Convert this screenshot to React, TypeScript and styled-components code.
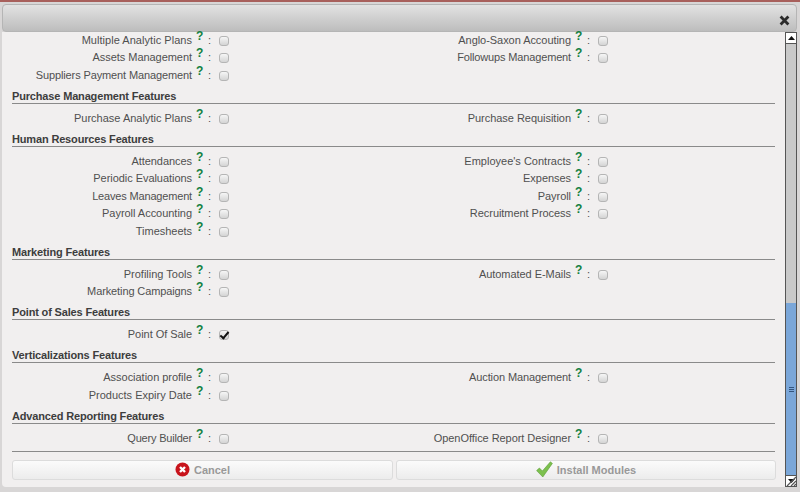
import styled, { createGlobalStyle } from 'styled-components';

interface Feature {
  label: string;
  checked?: boolean;
  tracking?: number;
}

interface Section {
  title?: string;
  features: Feature[];
}

const sections: Section[] = [
  {
    features: [
      { label: 'Multiple Analytic Plans', tracking: 0.04 },
      { label: 'Anglo-Saxon Accouting' },
      { label: 'Assets Management' },
      { label: 'Followups Management', tracking: -0.15 },
      { label: 'Suppliers Payment Management', tracking: -0.12 },
    ],
  },
  {
    title: 'Purchase Management Features',
    features: [
      { label: 'Purchase Analytic Plans', tracking: 0 },
      { label: 'Purchase Requisition', tracking: -0.03 },
    ],
  },
  {
    title: 'Human Resources Features',
    features: [
      { label: 'Attendances' },
      { label: "Employee's Contracts", tracking: 0 },
      { label: 'Periodic Evaluations' },
      { label: 'Expenses' },
      { label: 'Leaves Management', tracking: -0.17 },
      { label: 'Payroll' },
      { label: 'Payroll Accounting', tracking: -0.03 },
      { label: 'Recruitment Process' },
      { label: 'Timesheets', tracking: -0.03 },
    ],
  },
  {
    title: 'Marketing Features',
    features: [
      { label: 'Profiling Tools', tracking: 0 },
      { label: 'Automated E-Mails' },
      { label: 'Marketing Campaigns', tracking: -0.11 },
    ],
  },
  {
    title: 'Point of Sales Features',
    features: [{ label: 'Point Of Sale', checked: true }],
  },
  {
    title: 'Verticalizations Features',
    features: [
      { label: 'Association profile', tracking: -0.03 },
      { label: 'Auction Management', tracking: -0.11 },
      { label: 'Products Expiry Date', tracking: 0 },
    ],
  },
  {
    title: 'Advanced Reporting Features',
    features: [
      { label: 'Query Builder', tracking: -0.2 },
      { label: 'OpenOffice Report Designer', tracking: -0.05 },
    ],
  },
];

const App = () => {
  return (
    <>
      <GlobalStyle />
      <Dialog>
        <Header>
          <CloseIcon width="11" height="11" viewBox="0 0 11 11">
            <path d="M1.6 1.6 L9.4 9.4 M9.4 1.6 L1.6 9.4" stroke="#2b2b2b" strokeWidth="2.8" />
          </CloseIcon>
        </Header>
        <Body>
          <Content>
            {sections.map((section, i) => (
              <div key={i}>
                {section.title ? <SectionTitle>{section.title}</SectionTitle> : null}
                <FieldGrid>
                  {section.features.map((feature) => (
                    <Field key={feature.label}>
                      <FieldLabel $tracking={feature.tracking ?? -0.05}>{feature.label}</FieldLabel>
                      <Help>?</Help>
                      <Colon>:</Colon>
                      <Checkbox type="checkbox" defaultChecked={feature.checked} />
                    </Field>
                  ))}
                </FieldGrid>
              </div>
            ))}
            <Footer>
              <ActionButton>
                <svg width="15" height="15" viewBox="0 0 15 15">
                  <circle cx="7.5" cy="7.5" r="7" fill="#c8141c" />
                  <path d="M5 5 L10 10 M10 5 L5 10" stroke="#fff" strokeWidth="2.4" />
                </svg>
                Cancel
              </ActionButton>
              <ActionButton>
                <svg width="17" height="17" viewBox="0 0 17 17">
                  <path d="M0.6 9.6 L3.4 7 L6.4 10 L14.4 0.8 L16.4 2.4 L6.8 16 Z" fill="#7cc04e" stroke="#5d9e38" strokeWidth="0.6" />
                </svg>
                Install Modules
              </ActionButton>
            </Footer>
          </Content>
          <Scrollbar>
            <ScrollButton>
              <svg width="7" height="4" viewBox="0 0 7 4">
                <path d="M3.5 0 L7 4 L0 4 Z" fill="#111" />
              </svg>
            </ScrollButton>
            <ScrollTrack />
            <ScrollThumb>
              <Grip />
              <Grip />
              <Grip />
            </ScrollThumb>
            <ScrollButton>
              <svg width="7" height="4" viewBox="0 0 7 4">
                <path d="M0 0 L7 0 L3.5 4 Z" fill="#111" />
              </svg>
            </ScrollButton>
            <ResizeHandle width="12" height="12" viewBox="0 0 12 12">
              <path d="M11 2 L2 11 M11 6 L6 11 M11 9 L9 11" stroke="#555" strokeWidth="1.2" />
            </ResizeHandle>
          </Scrollbar>
        </Body>
      </Dialog>
    </>
  );
};

export default App;

const GlobalStyle = createGlobalStyle`
  html, body {
    margin: 0;
    padding: 0;
    height: 492px;
    overflow: hidden;
    background: #cfcfcf;
  }

  body {
    font-family: "Liberation Sans", Arial, sans-serif;
    font-size: 11px;
    color: #505050;
  }
`;

const Dialog = styled.div`
  box-sizing: border-box;
  width: 800px;
  height: 492px;
  padding: 0 3px 5px 2px;
  border-top: 2px solid #a8605c;
  background: #d8d6d6;
  display: flex;
  flex-direction: column;
`;

const Header = styled.div`
  box-sizing: border-box;
  height: 28px;
  flex: none;
  margin-top: 2px;
  padding: 10px 6px 0 0;
  border: 1px solid #b5b5b5;
  border-radius: 4px;
  background: linear-gradient(#e2e2e2, #bdbdbd);
  display: flex;
  justify-content: flex-end;
`;

const CloseIcon = styled.svg`
  display: block;
`;

const Body = styled.div`
  flex: 1;
  min-height: 0;
  display: flex;
  background: #f1efef;
  border-radius: 0 0 4px 4px;
`;

const Content = styled.div`
  flex: 1;
  min-width: 0;
  margin-top: -0.7px;
  padding: 0 10px;
`;

const SectionTitle = styled.div`
  height: 14px;
  margin: 5.4px 0 5.3px;
  line-height: 15px;
  font-weight: bold;
  letter-spacing: -0.16px;
  color: #3d3d3d;
  border-bottom: 1px solid #8a8a8a;
`;

const FieldGrid = styled.div`
  display: grid;
  grid-template-columns: 379px 1fr;
  grid-auto-rows: 17.4px;
`;

const Field = styled.div`
  display: flex;
  align-items: center;
`;

const FieldLabel = styled.span<{ $tracking: number }>`
  width: 180px;
  flex: none;
  text-align: right;
  letter-spacing: ${(props) => props.$tracking}px;
`;

const Help = styled.sup`
  width: 8px;
  margin-left: 4px;
  font-size: 12px;
  line-height: 12px;
  font-weight: bold;
  color: #12803f;
  position: relative;
  top: -4px;
  vertical-align: baseline;
`;

const Colon = styled.span`
  margin-left: 4px;
  width: 11px;
`;

const Checkbox = styled.input`
  appearance: none;
  box-sizing: border-box;
  position: relative;
  width: 10px;
  height: 10px;
  margin: 2px 0 0;
  border: 1px solid #b5b5b5;
  border-radius: 3px;
  background: linear-gradient(#f6f6f6, #d4d4d4);

  &:checked::after {
    content: '';
    position: absolute;
    left: 2px;
    top: -1px;
    width: 3px;
    height: 7px;
    border: solid #111;
    border-width: 0 2px 2px 0;
    transform: rotate(40deg);
  }
`;

const Footer = styled.div`
  display: grid;
  grid-template-columns: 381px 380px;
  gap: 3px;
  margin-top: 4.7px;
  padding-top: 8px;
  border-top: 1px solid #8a8a8a;
`;

const ActionButton = styled.button`
  box-sizing: border-box;
  height: 20px;
  padding: 0;
  border: 1px solid #dcdcdc;
  border-radius: 3px;
  background: linear-gradient(#fbfbfb, #ececec);
  font-family: inherit;
  font-size: 11px;
  font-weight: bold;
  color: #999;
  display: flex;
  align-items: center;
  justify-content: center;
  gap: 4px;
`;

const Scrollbar = styled.div`
  box-sizing: border-box;
  width: 12px;
  flex: none;
  display: flex;
  flex-direction: column;
  position: relative;
  border: 1px solid #555;
  border-width: 0 1px;
`;

const ScrollButton = styled.div`
  box-sizing: border-box;
  height: 12px;
  flex: none;
  background: #fff;
  border: solid #555;
  border-width: 1px 0;
  display: flex;
  align-items: center;
  justify-content: center;
`;

const ScrollTrack = styled.div`
  height: 259px;
  flex: none;
  background: #c9c9c9;
`;

const ScrollThumb = styled.div`
  flex: 1;
  background: #7ba7d9;
  display: flex;
  flex-direction: column;
  align-items: center;
  justify-content: center;
  gap: 1px;
`;

const Grip = styled.div`
  width: 5px;
  height: 1px;
  background: #33557f;
`;

const ResizeHandle = styled.svg`
  position: absolute;
  right: -1px;
  bottom: 0;
`;
